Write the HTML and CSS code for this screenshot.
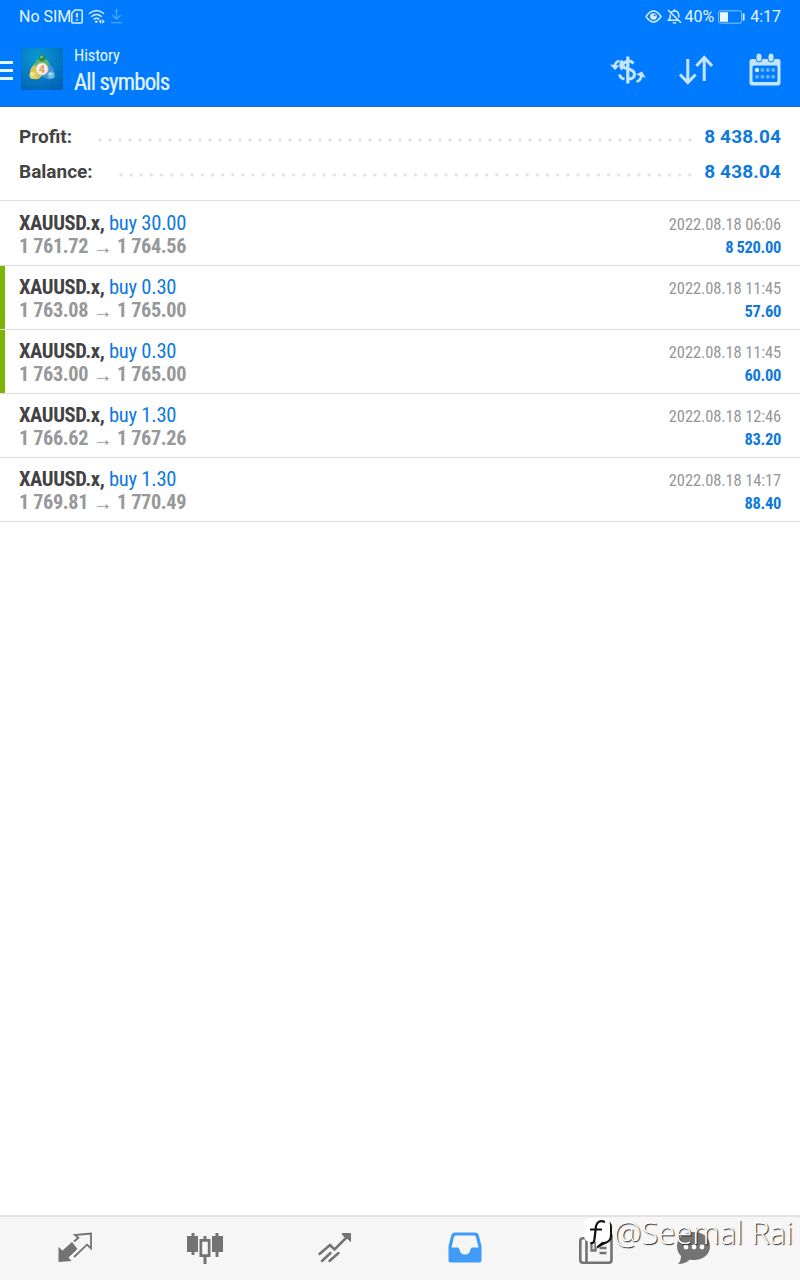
FILE: index.html
```html
<!DOCTYPE html>
<html lang="en">
<head>
    <meta charset="UTF-8">
    <meta name="viewport" content="width=device-width, initial-scale=1.0">
    <title>History</title>
    <link rel="stylesheet" href="styles.css">
</head>
<body>
    <div class="app">
        <header class="header">
            <div class="status-bar">
                <div class="status-left">
                    <span class="carrier">No SIM</span>
                    <svg class="icon-sim" width="12" height="15" viewBox="0 0 12 15" fill="none" stroke="#d9efff" stroke-width="1.5">
                        <path d="M4 .9h6q1.2 0 1.2 1.2v10.8q0 1.2-1.2 1.2H2q-1.2 0-1.2-1.2V4.2z"/>
                        <path d="M6 4v4.5M6 10v1.6" stroke-width="1.8"/>
                    </svg>
                    <svg class="icon-wifi" width="18" height="15" viewBox="0 0 18 15" fill="none" stroke="#d9efff" stroke-width="1.5">
                        <path d="M1 4.8q7.5-6.6 15 0M3.3 7.7q5.2-4.4 10.4 0M5.7 10.3q2.8-2.2 5.6 0"/>
                        <circle cx="8.3" cy="12.7" r="1.3" fill="#d9efff" stroke="none"/>
                        <path d="M13.2 10.2l-2.6 2.3 2.6 2.3zM14.2 10.2l2.6 2.3-2.6 2.3z" fill="#d9efff" stroke="none"/>
                    </svg>
                    <svg class="icon-download" width="13" height="15" viewBox="0 0 13 15" fill="none" stroke="#4fa6ff" stroke-width="1.3">
                        <path d="M6.5 0v10M2.4 6.2l4.1 4 4.1-4M1 13.7h11"/>
                        <circle cx="6.5" cy="2" r="1" fill="#65b2ff" stroke="none"/>
                    </svg>
                </div>
                <div class="status-right">
                    <svg width="17" height="13" viewBox="0 0 17 13" fill="none" stroke="#d9efff" stroke-width="1.4">
                        <path d="M1 6.5q7.5-11 15 0q-7.5 11-15 0z"/>
                        <circle cx="8.5" cy="6.5" r="3.3" fill="#d9efff" stroke="none"/>
                        <circle cx="9.7" cy="5.3" r="1" fill="#007aff" stroke="none"/>
                    </svg>
                    <svg class="icon-bell" width="15" height="15" viewBox="0 0 15 15" fill="none" stroke="#d9efff" stroke-width="1.5">
                        <path d="M4 3.8q1.2-1.7 3.5-1.7 4.2 0 4.2 4.2v2.2M3.2 5.5v3.2L1.4 11.3h9.8M7.5.3v1.8M5.8 13.5q1.7 1.2 3.4 0M1 1l13 12.7"/>
                    </svg>
                    <span class="percent">40%</span>
                    <svg class="icon-battery" width="27" height="14" viewBox="0 0 27 14">
                        <rect x=".6" y=".8" width="23" height="12.4" rx="2" fill="none" stroke="#8dc6ff"/>
                        <rect x="2" y="2.2" width="8" height="9.6" fill="#e8f6ff"/>
                        <rect x="24.8" y="3.2" width="1.8" height="7.6" rx=".8" fill="#d9efff"/>
                    </svg>
                    <span class="clock">4:17</span>
                </div>
            </div>
            <div class="toolbar">
                <div class="menu-icon"><i></i><i></i><i></i></div>
                <svg class="logo" width="42" height="42" viewBox="0 0 42 42">
                    <defs>
                        <radialGradient id="sea" cx=".4" cy=".25" r=".85">
                            <stop offset="0" stop-color="#0a9cd6"/>
                            <stop offset="1" stop-color="#0060b4"/>
                        </radialGradient>
                    </defs>
                    <rect width="42" height="42" fill="url(#sea)"/>
                    <path d="M7 0v42M14 0v42M21 0v42M28 0v42M35 0v42M0 7h42M0 14h42M0 21h42M0 28h42M0 35h42" stroke="#1686c8" stroke-width=".3"/>
                    <path d="M13 19c0-4 2-7 5-8h6c3 1 5 4 5 8l-8-3z" fill="#5bb56d"/>
                    <path d="M14 16c-4 3-5 6-5 9-1 4 0 6 4 6 4 1 7-1 8-4l-5-4z" fill="#d8c54d"/>
                    <path d="M28 16c3 2 5 5 5 8 2 4 1 7-3 7-4 1-7-1-9-4l5-4z" fill="#4197d6"/>
                    <circle cx="21" cy="10" r="3.2" fill="#2f8a50"/>
                    <circle cx="20.5" cy="9" r="1.3" fill="#7cc98a"/>
                    <circle cx="12" cy="27" r="3.4" fill="#e7d76b"/>
                    <circle cx="11" cy="26" r="1.3" fill="#fbf3ab"/>
                    <circle cx="30" cy="27" r="3.4" fill="#70bbec"/>
                    <circle cx="29.5" cy="26" r="1.3" fill="#c4e8fc"/>
                    <circle cx="21" cy="21" r="6" fill="#fbf1e6" stroke="#d3d3bd"/>
                    <text x="21" y="25" text-anchor="middle" class="logo-digit">4</text>
                </svg>
                <div class="titles">
                    <div class="subtitle">History</div>
                    <div class="title">All symbols</div>
                </div>
                <div class="actions">
                    <svg width="36" height="30" viewBox="0 0 36 30" fill="none" stroke="#c5e5ff" stroke-width="3">
                        <path d="M17.8 1.5v27" stroke-width="3.2"/>
                        <path d="M23.5 8.5Q20.5 5 17.500 6.5q-5 1-4.500 4 .5 2.500 5 3.500 6.500 1.500 6.500 5.200 0 4.800-7 4.800"/>
                        <path d="M12.500 5.500q-3.500 4.500 0 9M14.500 24Q10.500 23.500 9.500 19.500"/>
                        <path d="M9.5 6Q5.5 6 4.5 12" stroke-width="2.6"/>
                        <path d="M0 9.5l9.5 1-4.5 4.5z" fill="#c5e5ff" stroke="none"/>
                        <path d="M26.5 26.5q4-.5 5-6" stroke-width="2.6"/>
                        <path d="M26 19.5l6-3 3.8 6.5z" fill="#c5e5ff" stroke="none"/>
                    </svg>
                    <svg width="34" height="30" viewBox="0 0 34 30" fill="none" stroke="#c5e5ff" stroke-width="3">
                        <path d="M8.8 4v23.5M1 19.5l7.8 8 7.8-8M25.2 26V3M17.4 11l7.8-8.5L33 11"/>
                    </svg>
                    <svg width="32" height="34" viewBox="0 0 32 34">
                        <path fill="#c5e5ff" fill-rule="evenodd" d="M3 6h26q2.500 0 2.500 2.500v21q0 3-2.500 3H3q-2.500 0-2.500-3v-21Q.5 6 3 6zM5 12.500q-1.500 0-1.500 1.500v13.500Q3.500 29 5 29h22q1.500 0 1.500-1.500V14q0-1.500-1.500-1.500z"/>
                        <rect x="7" y="0" width="6" height="9" rx="3" fill="#c5e5ff" stroke="#007aff" stroke-width="1"/>
                        <rect x="19" y="0" width="6" height="9" rx="3" fill="#c5e5ff" stroke="#007aff" stroke-width="1"/>
                        <circle cx="8" cy="17" r="2.200" fill="#d5edff"/>
                        <g fill="#63b2ff">
                            <circle cx="13.400" cy="17" r="2"/><circle cx="18.800" cy="17" r="2"/><circle cx="24.200" cy="17" r="2"/>
                            <circle cx="8" cy="23.700" r="2"/><circle cx="13.400" cy="23.700" r="2"/><circle cx="18.800" cy="23.700" r="2"/><circle cx="24.200" cy="23.700" r="2"/>
                        </g>
                    </svg>
                </div>
            </div>
        </header>

        <section class="summary">
            <div class="summary-row">
                <span class="summary-label">Profit:</span>
                <span class="dots"></span>
                <span class="summary-value">8 438.04</span>
            </div>
            <div class="summary-row">
                <span class="summary-label">Balance:</span>
                <span class="dots"></span>
                <span class="summary-value">8 438.04</span>
            </div>
        </section>

        <main class="deals">
            <div class="deal">
                <div class="deal-line"><span class="deal-name"><b>XAUUSD.x,</b> buy 30.00</span><span class="deal-time">2022.08.18 06:06</span></div>
                <div class="deal-line"><span class="deal-price">1 761.72<i class="arrow">→</i>1 764.56</span><span class="deal-profit">8 520.00</span></div>
            </div>
            <div class="deal marked">
                <div class="deal-line"><span class="deal-name"><b>XAUUSD.x,</b> buy 0.30</span><span class="deal-time">2022.08.18 11:45</span></div>
                <div class="deal-line"><span class="deal-price">1 763.08<i class="arrow">→</i>1 765.00</span><span class="deal-profit">57.60</span></div>
            </div>
            <div class="deal marked">
                <div class="deal-line"><span class="deal-name"><b>XAUUSD.x,</b> buy 0.30</span><span class="deal-time">2022.08.18 11:45</span></div>
                <div class="deal-line"><span class="deal-price">1 763.00<i class="arrow">→</i>1 765.00</span><span class="deal-profit">60.00</span></div>
            </div>
            <div class="deal">
                <div class="deal-line"><span class="deal-name"><b>XAUUSD.x,</b> buy 1.30</span><span class="deal-time">2022.08.18 12:46</span></div>
                <div class="deal-line"><span class="deal-price">1 766.62<i class="arrow">→</i>1 767.26</span><span class="deal-profit">83.20</span></div>
            </div>
            <div class="deal">
                <div class="deal-line"><span class="deal-name"><b>XAUUSD.x,</b> buy 1.30</span><span class="deal-time">2022.08.18 14:17</span></div>
                <div class="deal-line"><span class="deal-price">1 769.81<i class="arrow">→</i>1 770.49</span><span class="deal-profit">88.40</span></div>
            </div>
        </main>

        <nav class="tabs">
            <div class="tab">
                <svg width="36" height="34" viewBox="0 0 36 34">
                    <path fill="#737373" d="M1.5 31V16l4 3.5 9.5-8.500 5.500 7-9 8.500 3 3.500z"/>
                    <path fill="none" stroke="#737373" stroke-width="1.800" d="M17 10.500l4.300-3.800L18 4l16-1.500v15l-4-3.800L17 26"/>
                </svg>
            </div>
            <div class="tab">
                <svg width="36" height="34" viewBox="0 0 36 34" fill="#737373">
                    <path d="M4.500 2h3v3H11v16H7.500v3h-3v-3H0V5h4.500zM28.500 2h3v3H36v16h-4.500v5h-3v-5H25V5h3.500z"/>
                    <path fill-rule="evenodd" d="M16.500 5h3v3h4v18h-4v7h-3v-7h-4V8h4zM15.200 10.700v12.600h5.600V10.700z"/>
                </svg>
            </div>
            <div class="tab">
                <svg width="36" height="34" viewBox="0 0 36 34" fill="none" stroke="#737373" stroke-width="2.500" stroke-linecap="round">
                    <path d="M2.500 23l10.500-9 4.500 4.500L31 5M5 30l8.500-8M12.500 30l9-8"/>
                    <path d="M25.500 2.500h8v8l-3-3-3.500-2z" fill="#737373" stroke-width="1"/>
                </svg>
            </div>
            <div class="tab">
                <svg width="36" height="34" viewBox="0 0 36 34">
                    <path fill="#419bf9" fill-rule="evenodd" d="M7.500 1.500h21q2.500 0 3.200 2.500l2.800 11v14q0 2.500-2.500 2.500H4Q1.500 31.500 1.500 29V15L4.300 4Q5 1.500 7.500 1.500zM9 4.500Q7.500 4.500 7 6L4.500 16.500h6q1.500 0 2 2 .8 5 5.500 5t5.500-5q.5-2 2-2h6L29 6q-.5-1.500-2-1.500z"/>
                </svg>
            </div>
            <div class="tab tab-news">
                <svg width="36" height="34" viewBox="0 0 36 34" fill="none" stroke="#737373" stroke-width="2.600">
                    <path d="M8 31.700H5q-2.700 0-2.700-2.700V10q0-2.700 2.700-2.700h3M8.500 4.800h25V29q0 2.700-2.700 2.700H8.500z"/>
                    <path d="M13.500 10.500h4v9h-4zM21.500 12h7M21.500 17h7M21.500 22h7" stroke-width="2.300"/>
                </svg>
            </div>
            <div class="tab tab-chat">
                <svg width="36" height="34" viewBox="0 0 36 34">
                    <path fill="#737373" d="M18 1c9 0 16 5.500 16 14S27 29 18 29q-2 0-4-.5Q9 33 2 33q3-3 3-8-4-4-4-10C1 6.500 9 1 18 1z"/>
                    <circle cx="10" cy="16" r="2.400" fill="#fff"/><circle cx="18" cy="16" r="2.400" fill="#fff"/><circle cx="26" cy="16" r="2.400" fill="#fff"/>
                </svg>
            </div>
        </nav>

        <div class="watermark">
            <svg width="31" height="34" viewBox="0 0 31 34">
                <path fill="#111" d="M11 4h10q8 0 8 8v8q0 6-7 8l-8 4.500V28z"/>
                <path fill="#fff" d="M8 2h12q7 0 7 7v10q0 7-7 7h-1l-6 5v-5H8q-7 0-7-7V9q0-7 7-7z"/>
                <path fill="none" stroke="#111" stroke-width="2.200" d="M22 6q-7-3-9 4l-1.500 13q-.5 5-4 4M7 13.500h12"/>
            </svg>
            <span>@Seemal Rai</span>
        </div>
    </div>
</body>
</html>
```

FILE: styles.css
```css
* {
    margin: 0;
    padding: 0;
    box-sizing: border-box;
}

body {
    font-family: Roboto, "Liberation Sans", sans-serif;
    background: #fff;
    color: #434343;
}

svg {
    display: block;
    flex: none;
}

.app {
    position: relative;
    display: flex;
    flex-direction: column;
    width: 800px;
    height: 1280px;
    overflow: hidden;
}

.header {
    height: 107px;
    background: #007aff;
    border-bottom: 1px solid #1c6fbd;
    color: #e4f6ff;
}

.status-bar {
    display: flex;
    justify-content: space-between;
    height: 33px;
    padding: 0 19px;
    font-size: 16px;
}

.status-left,
.status-right {
    display: flex;
    align-items: center;
}

.icon-sim {
    margin-left: 0;
}

.icon-wifi {
    margin-left: 5px;
}

.icon-download {
    margin-left: 4px;
}

.icon-bell {
    margin: 0 2px 0 5px;
}

.icon-battery {
    margin: 0 5px 0 4px;
}

.toolbar {
    display: flex;
    align-items: center;
    height: 72px;
    padding-right: 19px;
}

.menu-icon {
    display: flex;
    flex-direction: column;
    gap: 5px;
    width: 13px;
    margin: 3px 8px 0 0;
}

.menu-icon i {
    height: 3px;
    background: #e4f6ff;
}

.logo-digit {
    font-size: 11px;
    font-weight: 700;
    fill: #e69562;
}

.titles {
    margin-left: 11px;
    padding-top: 2px;
    font-family: "Roboto Condensed", Roboto, sans-serif;
    font-stretch: 75%;
}

.subtitle {
    font-size: 16.5px;
    line-height: 24px;
    letter-spacing: -0.1px;
}

.title {
    font-size: 23px;
    line-height: 29px;
    letter-spacing: -0.9px;
    -webkit-text-stroke: 0.2px #e4f6ff;
}

.actions {
    display: flex;
    align-items: center;
    gap: 33px;
    margin-left: auto;
    padding-top: 2px;
}

.actions svg:last-child {
    margin-left: 3px;
}

.summary {
    height: 94px;
    padding: 12px 19px 0;
    border-bottom: 1px solid #dedede;
}

.summary-row {
    display: flex;
    align-items: center;
    height: 35px;
    font-size: 19px;
    font-weight: 700;
}

.dots {
    flex: 1;
    height: 4px;
    margin: 7px 9px 0 23px;
    background-image: radial-gradient(circle, #e2e2e2 1.2px, transparent 2px);
    background-size: 10px 4px;
    background-repeat: space no-repeat;
}

.summary-value {
    letter-spacing: 0.15px;
    color: #0f79dc;
}

.deals {
    flex: 1;
    font-family: "Roboto Condensed", Roboto, sans-serif;
    font-stretch: 75%;
}

.deal {
    height: 64px;
    padding: 9px 19px 0;
    border-bottom: 1px solid #dedede;
}

.deal:first-child {
    height: 65px;
    padding-top: 10px;
}

.marked {
    background: linear-gradient(#7cb305, #7cb305) left top / 5px 100% no-repeat;
}

.deal-line {
    display: flex;
    justify-content: space-between;
    align-items: center;
    height: 23px;
}

.deal-name {
    font-size: 20.6px;
    letter-spacing: -0.25px;
    color: #0f79dc;
}

.deal-name b {
    letter-spacing: -0.4px;
    color: #434343;
}

.deal-time,
.deal-profit {
    padding-top: 3px;
    font-size: 16.5px;
}

.deal-time {
    letter-spacing: -0.12px;
    color: #969696;
}

.deal-price {
    font-size: 20.3px;
    font-weight: 700;
    letter-spacing: -0.38px;
    color: #969899;
}

.arrow {
    display: inline-block;
    width: 29px;
    font-family: "Liberation Sans", sans-serif;
    font-size: 20px;
    font-style: normal;
    font-weight: 400;
    line-height: 1;
    text-align: center;
    vertical-align: -1px;
}

.deal-profit {
    font-weight: 700;
    letter-spacing: -0.35px;
    color: #0f79dc;
}

.tabs {
    display: flex;
    align-items: center;
    height: 65px;
    padding: 0 0 2px 10px;
    border-top: 2px solid #e2e2e2;
    background: #f6f6f6;
}

.tab {
    display: flex;
    justify-content: center;
    width: 130px;
}

.tab-news {
    padding-left: 2px;
}

.tab-chat {
    width: 67px;
}

.watermark {
    position: absolute;
    right: 7px;
    bottom: 30px;
    display: flex;
    align-items: center;
    font-family: "Open Sans", "Noto Sans", sans-serif;
    font-size: 31px;
    font-weight: 300;
    line-height: 34px;
    color: #fff;
    text-shadow: 1px 1px 1px #222;
}

.watermark span {
    margin-top: -2px;
}
```
